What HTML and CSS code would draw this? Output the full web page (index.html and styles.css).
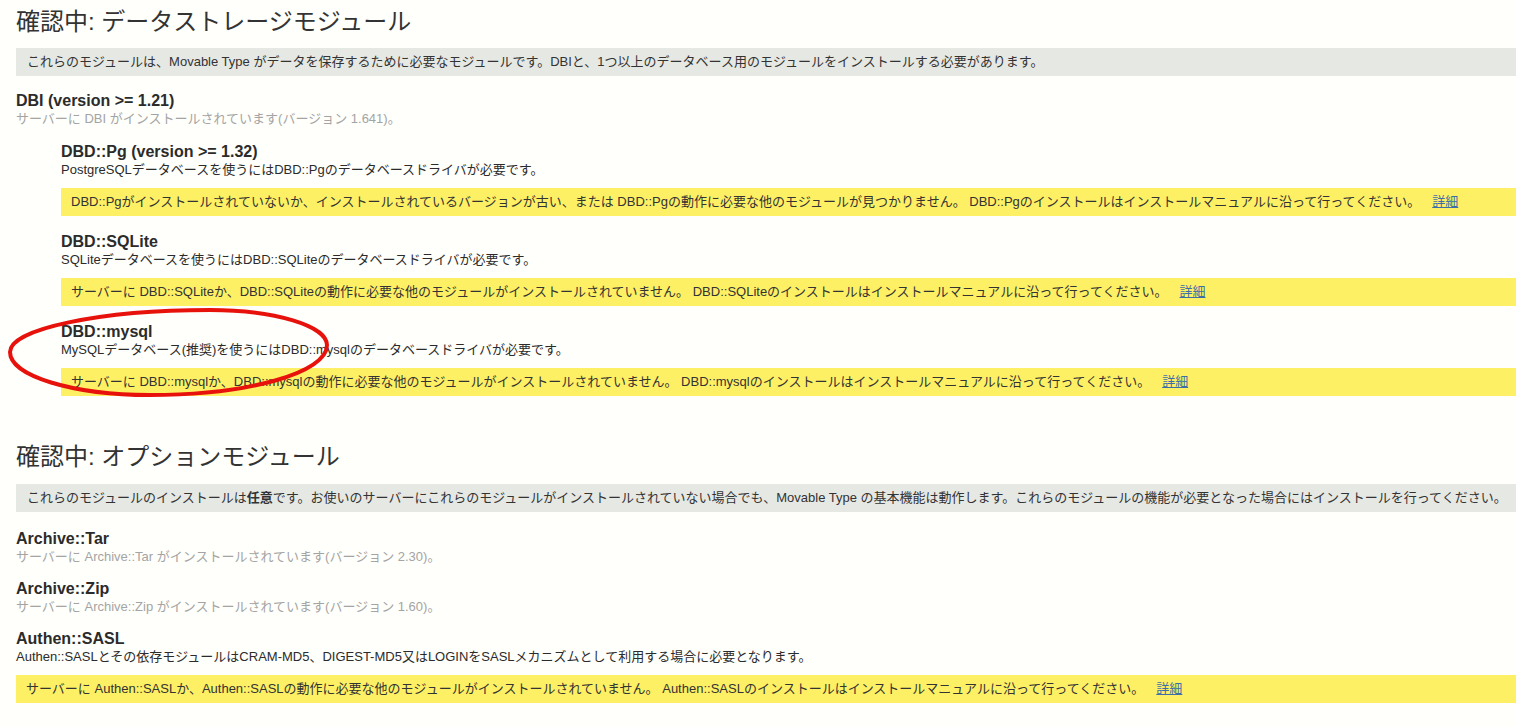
FILE: index.html
```html
<!DOCTYPE html>
<html lang="ja">
<head>
<meta charset="utf-8">
<title>確認中: データストレージモジュール</title>
<link rel="stylesheet" href="styles.css">
</head>
<body>
<div class="page">
  <section class="check-section">
    <h1 class="section-title">確認中: データストレージモジュール</h1>
    <p class="intro">これらのモジュールは、Movable Type がデータを保存するために必要なモジュールです。DBIと、1つ以上のデータベース用のモジュールをインストールする必要があります。</p>
    <div class="module first">
      <h2 class="module-name">DBI (version &gt;= 1.21)</h2>
      <p class="module-status">サーバーに DBI がインストールされています(バージョン 1.641)。</p>
      <div class="submodules">
        <div class="module sub-first">
          <h2 class="module-name">DBD::Pg (version &gt;= 1.32)</h2>
          <p class="module-desc">PostgreSQLデータベースを使うにはDBD::Pgのデータベースドライバが必要です。</p>
          <p class="msg">DBD::Pgがインストールされていないか、インストールされているバージョンが古い、または DBD::Pgの動作に必要な他のモジュールが見つかりません。 DBD::Pgのインストールはインストールマニュアルに沿って行ってください。<a class="more" href="#">詳細</a></p>
        </div>
        <div class="module">
          <h2 class="module-name">DBD::SQLite</h2>
          <p class="module-desc">SQLiteデータベースを使うにはDBD::SQLiteのデータベースドライバが必要です。</p>
          <p class="msg">サーバーに DBD::SQLiteか、DBD::SQLiteの動作に必要な他のモジュールがインストールされていません。 DBD::SQLiteのインストールはインストールマニュアルに沿って行ってください。<a class="more" href="#">詳細</a></p>
        </div>
        <div class="module">
          <h2 class="module-name">DBD::mysql</h2>
          <p class="module-desc">MySQLデータベース(推奨)を使うにはDBD::mysqlのデータベースドライバが必要です。</p>
          <p class="msg">サーバーに DBD::mysqlか、DBD::mysqlの動作に必要な他のモジュールがインストールされていません。 DBD::mysqlのインストールはインストールマニュアルに沿って行ってください。<a class="more" href="#">詳細</a></p>
        </div>
      </div>
    </div>
  </section>

  <section class="check-section second">
    <h1 class="section-title">確認中: オプションモジュール</h1>
    <p class="intro">これらのモジュールのインストールは<strong>任意</strong>です。お使いのサーバーにこれらのモジュールがインストールされていない場合でも、Movable Type の基本機能は動作します。これらのモジュールの機能が必要となった場合にはインストールを行ってください。</p>
    <div class="module opt-first">
      <h2 class="module-name">Archive::Tar</h2>
      <p class="module-status">サーバーに Archive::Tar がインストールされています(バージョン 2.30)。</p>
    </div>
    <div class="module opt">
      <h2 class="module-name">Archive::Zip</h2>
      <p class="module-status">サーバーに Archive::Zip がインストールされています(バージョン 1.60)。</p>
    </div>
    <div class="module opt">
      <h2 class="module-name">Authen::SASL</h2>
      <p class="module-desc">Authen::SASLとその依存モジュールはCRAM-MD5、DIGEST-MD5又はLOGINをSASLメカニズムとして利用する場合に必要となります。</p>
      <p class="msg">サーバーに Authen::SASLか、Authen::SASLの動作に必要な他のモジュールがインストールされていません。 Authen::SASLのインストールはインストールマニュアルに沿って行ってください。<a class="more" href="#">詳細</a></p>
    </div>
  </section>

  <svg class="annotation" width="340" height="110" viewBox="0 0 340 110" aria-hidden="true">
    <path d="M10 52 C10 29 100 10 210 10 C275 10 327 26 327 45 C327 73 248 95 150 95 C73 95 10 76 10 52 Z" fill="none" stroke="#e8120c" stroke-width="4"/>
  </svg>
</div>
</body>
</html>
```

FILE: styles.css
```css
html, body {
  margin: 0;
  padding: 0;
  background: #fffffb;
}

body {
  font-family: "Liberation Sans", Arial, "Noto Sans CJK JP", sans-serif;
  color: #333333;
  font-size: 13px;
}

.page {
  position: relative;
  padding: 7px 0 0 16px;
}

.section-title {
  margin: 0;
  font-size: 24px;
  line-height: 30px;
  font-weight: normal;
  color: #333333;
}

.check-section.second {
  margin-top: 46px;
}

.intro {
  margin: 11px 0 0;
  padding: 5px 11px;
  background: #e6e8e3;
  line-height: 18px;
  white-space: nowrap;
  color: #333333;
}

.check-section.second .intro {
  margin-top: 12px;
}

.intro strong {
  font-weight: bold;
}

.module-name {
  margin: 0;
  font-size: 16px;
  line-height: 18px;
  font-weight: bold;
  color: #2b2b2b;
}

.module-status,
.module-desc {
  margin: 0;
  line-height: 18px;
}

.module-status {
  color: #a4a4a4;
}

.module-desc {
  color: #2b2b2b;
}

.module {
  margin-top: 17px;
}

.module.first {
  margin-top: 16px;
}

.submodules {
  padding-left: 45px;
}

.module.sub-first {
  margin-top: 15px;
}

.module.opt-first {
  margin-top: 18px;
}

.module.opt {
  margin-top: 14px;
}

.msg {
  margin: 9px 0 0;
  padding: 5px 10px;
  background: #fef064;
  line-height: 18px;
  white-space: nowrap;
  color: #333333;
}

.more {
  margin-left: 12px;
  color: #3d6ea8;
  text-decoration: underline;
}

.annotation {
  position: absolute;
  left: 0;
  top: 300px;
  pointer-events: none;
}
```
